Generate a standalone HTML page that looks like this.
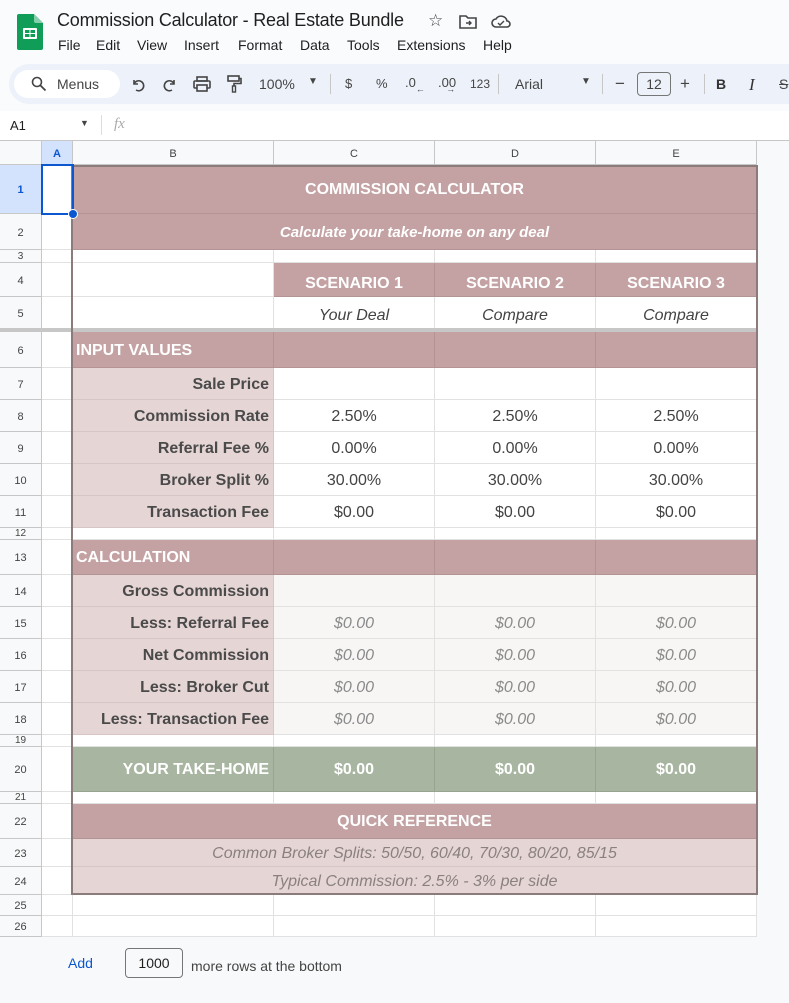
<!DOCTYPE html>
<html><head><meta charset="utf-8"><style>
*{margin:0;padding:0;box-sizing:border-box}
body{width:789px;height:1003px;background:#f8f9fa;font-family:"Liberation Sans",Arial,sans-serif;position:relative;overflow:hidden}
.r{position:absolute;left:0;width:757px}
.c{position:absolute;top:0;bottom:0;border-right:1px solid #e1e1e1;border-bottom:1px solid #e1e1e1;display:flex;align-items:center;justify-content:center;font-size:16px;color:#434343;white-space:nowrap;overflow:hidden;background:#fff;padding-top:2px}
.h{left:0;width:42px;font-size:11px;color:#444;background:#f8f9fa;border-right:1px solid #c7c7c7;border-bottom:1px solid #c7c7c7}
.a{left:42px;width:31px}
.b{left:73px;width:201px}
.cc{left:274px;width:161px}
.d{left:435px;width:161px}
.e{left:596px;width:161px}
.be{left:73px;width:684px}
.m{background:#c4a2a3;color:#fff;font-weight:bold;border-color:#b39394}
.p{background:#e6d5d5;justify-content:flex-end;padding-right:4px;font-weight:bold;color:#4a4a4a;border-color:#d8c6c6}
.g{background:#f7f6f5;color:#8a8a8a;font-style:italic}
.gr{background:#a8b5a0;color:#fff;font-weight:bold;border-color:#97a58f}
.l{justify-content:flex-start;padding-left:3px}
.rt{justify-content:flex-end;padding-right:4px}
.bot{align-items:flex-end;padding-bottom:3px}
.t{position:absolute;font-size:14px;color:#444;white-space:nowrap}
.mn{position:absolute;top:37px;font-size:14px;color:#1f1f1f}
</style></head><body>
<div style="position:absolute;left:0;top:0;width:789px;height:141px;background:#f9fbfd"></div>
<svg style="position:absolute;left:17px;top:14px" width="26" height="36" viewBox="0 0 26 36"><path d="M2 0h15l9 9v25a2 2 0 0 1-2 2H2a2 2 0 0 1-2-2V2a2 2 0 0 1 2-2z" fill="#0f9d58"/><path d="M17 0l9 9h-7a2 2 0 0 1-2-2z" fill="#87ceac"/><rect x="6" y="14" width="14" height="11" rx="1" fill="#fff"/><rect x="8" y="16" width="4.5" height="3" fill="#0f9d58"/><rect x="13.5" y="16" width="4.5" height="3" fill="#0f9d58"/><rect x="8" y="20" width="4.5" height="3" fill="#0f9d58"/><rect x="13.5" y="20" width="4.5" height="3" fill="#0f9d58"/></svg>
<div style="position:absolute;left:57px;top:10px;font-size:18px;color:#1f1f1f;letter-spacing:-0.2px">Commission Calculator - Real Estate Bundle</div>
<div style="position:absolute;left:428px;top:11px;font-size:17px;color:#444">☆</div>
<svg style="position:absolute;left:459px;top:14px" width="18" height="15" viewBox="0 0 18 15"><path d="M1 2h6l2 2h8v10H1z" fill="none" stroke="#444" stroke-width="1.6"/><path d="M7 9h5M10 7l2 2-2 2" fill="none" stroke="#444" stroke-width="1.4"/></svg>
<svg style="position:absolute;left:491px;top:14px" width="20" height="15" viewBox="0 0 20 15"><path d="M5 13a4 4 0 0 1 0-8 6 6 0 0 1 11 2 3 3 0 0 1 0 6z" fill="none" stroke="#444" stroke-width="1.6"/><path d="M7 9l2 2 4-4" fill="none" stroke="#444" stroke-width="1.4"/></svg>
<div class="mn" style="left:58px">File</div>
<div class="mn" style="left:96px">Edit</div>
<div class="mn" style="left:137px">View</div>
<div class="mn" style="left:184px">Insert</div>
<div class="mn" style="left:238px">Format</div>
<div class="mn" style="left:300px">Data</div>
<div class="mn" style="left:347px">Tools</div>
<div class="mn" style="left:397px">Extensions</div>
<div class="mn" style="left:483px">Help</div>
<div style="position:absolute;left:9px;top:64px;width:800px;height:40px;border-radius:20px;background:#edf2fa"></div>
<div style="position:absolute;left:14px;top:70px;width:106px;height:28px;border-radius:14px;background:#fff"></div>
<svg style="position:absolute;left:31px;top:76px" width="16" height="16" viewBox="0 0 16 16"><circle cx="6" cy="6" r="4.5" fill="none" stroke="#444" stroke-width="1.6"/><path d="M9.5 9.5l5 5" stroke="#444" stroke-width="1.8"/></svg>
<div class="t" style="left:57px;top:76px">Menus</div>
<svg style="position:absolute;left:130px;top:77px" width="16" height="16" viewBox="0 0 16 16"><path d="M4 3v4h4" fill="none" stroke="#444" stroke-width="1.6"/><path d="M4 7a5 5 0 1 1 2 6" fill="none" stroke="#444" stroke-width="1.6"/></svg>
<svg style="position:absolute;left:162px;top:77px" width="16" height="16" viewBox="0 0 16 16"><path d="M12 3v4H8" fill="none" stroke="#444" stroke-width="1.6"/><path d="M12 7a5 5 0 1 0-2 6" fill="none" stroke="#444" stroke-width="1.6"/></svg>
<svg style="position:absolute;left:193px;top:76px" width="18" height="16" viewBox="0 0 18 16"><rect x="4" y="1" width="10" height="4" fill="none" stroke="#444" stroke-width="1.6"/><rect x="1" y="5" width="16" height="7" rx="1" fill="none" stroke="#444" stroke-width="1.6"/><rect x="4" y="9" width="10" height="6" fill="#edf2fa" stroke="#444" stroke-width="1.6"/></svg>
<svg style="position:absolute;left:226px;top:75px" width="16" height="18" viewBox="0 0 16 18"><rect x="2" y="1" width="11" height="5" fill="none" stroke="#444" stroke-width="1.6"/><path d="M13 3.5h2v5H8v3" fill="none" stroke="#444" stroke-width="1.6"/><rect x="6.5" y="11" width="3" height="6" fill="none" stroke="#444" stroke-width="1.4"/></svg>
<div class="t" style="left:259px;top:76px">100%</div>
<div class="t" style="left:308px;top:76px;font-size:10px">▼</div>
<div class="t" style="left:345px;top:76px;font-size:13px">$</div>
<div class="t" style="left:376px;top:76px;font-size:13px">%</div>
<div class="t" style="left:405px;top:75px;font-size:13px">.0<span style="font-size:9px;position:relative;top:5px">←</span></div>
<div class="t" style="left:438px;top:75px;font-size:13px">.00<span style="font-size:9px;position:relative;top:5px;margin-left:-10px">→</span></div>
<div class="t" style="left:470px;top:77px;font-size:12px">123</div>
<div class="t" style="left:515px;top:76px">Arial</div>
<div class="t" style="left:581px;top:76px;font-size:10px">▼</div>
<div class="t" style="left:615px;top:74px;font-size:17px">−</div>
<div class="t" style="left:680px;top:74px;font-size:17px">+</div>
<div class="t" style="left:716px;top:76px;font-weight:bold;color:#333">B</div>
<div class="t" style="left:749px;top:75px;font-style:italic;font-family:'Liberation Serif',serif;font-size:17px;color:#333">I</div>
<div class="t" style="left:779px;top:76px;text-decoration:line-through">S</div>
<div style="position:absolute;left:637px;top:72px;width:34px;height:24px;border:1px solid #747775;border-radius:4px;font-size:14px;color:#444;text-align:center;line-height:22px;background:#edf2fa">12</div>
<div style="position:absolute;left:330px;top:74px;width:1px;height:20px;background:#c7c7c7"></div>
<div style="position:absolute;left:498px;top:74px;width:1px;height:20px;background:#c7c7c7"></div>
<div style="position:absolute;left:602px;top:74px;width:1px;height:20px;background:#c7c7c7"></div>
<div style="position:absolute;left:704px;top:74px;width:1px;height:20px;background:#c7c7c7"></div>
<div style="position:absolute;left:0;top:111px;width:789px;height:30px;background:#fff;border-bottom:1px solid #c7c7c7"></div>
<div style="position:absolute;left:10px;top:118px;font-size:13px;color:#1f1f1f">A1</div>
<div style="position:absolute;left:80px;top:118px;font-size:9px;color:#444">▼</div>
<div style="position:absolute;left:101px;top:115px;width:1px;height:20px;background:#ddd"></div>
<div style="position:absolute;left:114px;top:116px;font-size:15px;color:#aaa;font-style:italic;font-family:'Liberation Serif',serif">fx</div>

<div class="r" style="top:141px;height:24px">
<div class="c h"></div>
<div class="c a" style="background:#d3e3fd;color:#0b57d0;font-size:11px;font-weight:bold;border-color:#c7c7c7">A</div>
<div class="c b" style="background:#f8f9fa;font-size:11px;border-color:#c7c7c7">B</div>
<div class="c cc" style="background:#f8f9fa;font-size:11px;border-color:#c7c7c7">C</div>
<div class="c d" style="background:#f8f9fa;font-size:11px;border-color:#c7c7c7">D</div>
<div class="c e" style="background:#f8f9fa;font-size:11px;border-color:#c7c7c7">E</div>
</div>

<div class="r" style="top:165px;height:49px"><div class="c h" style="background:#d3e3fd;color:#0b57d0;font-weight:bold">1</div><div class="c a"></div><div class="c be m">COMMISSION CALCULATOR</div></div>
<div class="r" style="top:214px;height:36px"><div class="c h">2</div><div class="c a"></div><div class="c be m" style="font-style:italic;font-size:15px">Calculate your take-home on any deal</div></div>
<div class="r" style="top:250px;height:13px"><div class="c h" style="font-size:10px;padding-top:0">3</div><div class="c a"></div><div class="c b"></div><div class="c cc"></div><div class="c d"></div><div class="c e"></div></div>
<div class="r" style="top:263px;height:34px"><div class="c h">4</div><div class="c a"></div><div class="c b"></div><div class="c cc m bot">SCENARIO 1</div><div class="c d m bot">SCENARIO 2</div><div class="c e m bot">SCENARIO 3</div></div>
<div class="r" style="top:297px;height:32px"><div class="c h">5</div><div class="c a"></div><div class="c b"></div><div class="c cc bot" style="font-style:italic">Your Deal</div><div class="c d bot" style="font-style:italic">Compare</div><div class="c e bot" style="font-style:italic">Compare</div></div>
<div style="position:absolute;left:0;top:328px;width:757px;height:4px;background:#c7c7c7"></div>
<div class="r" style="top:332px;height:36px"><div class="c h">6</div><div class="c a"></div><div class="c b m l">INPUT VALUES</div><div class="c cc m"></div><div class="c d m"></div><div class="c e m"></div></div>
<div class="r" style="top:368px;height:32px"><div class="c h">7</div><div class="c a"></div><div class="c b p">Sale Price</div><div class="c cc"></div><div class="c d"></div><div class="c e"></div></div>
<div class="r" style="top:400px;height:32px"><div class="c h">8</div><div class="c a"></div><div class="c b p">Commission Rate</div><div class="c cc">2.50%</div><div class="c d">2.50%</div><div class="c e">2.50%</div></div>
<div class="r" style="top:432px;height:32px"><div class="c h">9</div><div class="c a"></div><div class="c b p">Referral Fee %</div><div class="c cc">0.00%</div><div class="c d">0.00%</div><div class="c e">0.00%</div></div>
<div class="r" style="top:464px;height:32px"><div class="c h">10</div><div class="c a"></div><div class="c b p">Broker Split %</div><div class="c cc">30.00%</div><div class="c d">30.00%</div><div class="c e">30.00%</div></div>
<div class="r" style="top:496px;height:32px"><div class="c h">11</div><div class="c a"></div><div class="c b p">Transaction Fee</div><div class="c cc">$0.00</div><div class="c d">$0.00</div><div class="c e">$0.00</div></div>
<div class="r" style="top:528px;height:12px"><div class="c h" style="font-size:10px;padding-top:0">12</div><div class="c a"></div><div class="c b"></div><div class="c cc"></div><div class="c d"></div><div class="c e"></div></div>
<div class="r" style="top:540px;height:35px"><div class="c h">13</div><div class="c a"></div><div class="c b m l">CALCULATION</div><div class="c cc m"></div><div class="c d m"></div><div class="c e m"></div></div>
<div class="r" style="top:575px;height:32px"><div class="c h">14</div><div class="c a"></div><div class="c b p">Gross Commission</div><div class="c cc g"></div><div class="c d g"></div><div class="c e g"></div></div>
<div class="r" style="top:607px;height:32px"><div class="c h">15</div><div class="c a"></div><div class="c b p">Less: Referral Fee</div><div class="c cc g">$0.00</div><div class="c d g">$0.00</div><div class="c e g">$0.00</div></div>
<div class="r" style="top:639px;height:32px"><div class="c h">16</div><div class="c a"></div><div class="c b p">Net Commission</div><div class="c cc g">$0.00</div><div class="c d g">$0.00</div><div class="c e g">$0.00</div></div>
<div class="r" style="top:671px;height:32px"><div class="c h">17</div><div class="c a"></div><div class="c b p">Less: Broker Cut</div><div class="c cc g">$0.00</div><div class="c d g">$0.00</div><div class="c e g">$0.00</div></div>
<div class="r" style="top:703px;height:32px"><div class="c h">18</div><div class="c a"></div><div class="c b p">Less: Transaction Fee</div><div class="c cc g">$0.00</div><div class="c d g">$0.00</div><div class="c e g">$0.00</div></div>
<div class="r" style="top:735px;height:12px"><div class="c h" style="font-size:10px;padding-top:0">19</div><div class="c a"></div><div class="c b"></div><div class="c cc"></div><div class="c d"></div><div class="c e"></div></div>
<div class="r" style="top:747px;height:45px"><div class="c h">20</div><div class="c a"></div><div class="c b gr rt">YOUR TAKE-HOME</div><div class="c cc gr">$0.00</div><div class="c d gr">$0.00</div><div class="c e gr">$0.00</div></div>
<div class="r" style="top:792px;height:12px"><div class="c h" style="font-size:10px;padding-top:0">21</div><div class="c a"></div><div class="c b"></div><div class="c cc"></div><div class="c d"></div><div class="c e"></div></div>
<div class="r" style="top:804px;height:35px"><div class="c h">22</div><div class="c a"></div><div class="c be m">QUICK REFERENCE</div></div>
<div class="r" style="top:839px;height:28px"><div class="c h">23</div><div class="c a"></div><div class="c be" style="background:#e6d5d5;color:#8a8080;font-style:italic;border-color:#d8c6c6">Common Broker Splits: 50/50, 60/40, 70/30, 80/20, 85/15</div></div>
<div class="r" style="top:867px;height:28px"><div class="c h">24</div><div class="c a"></div><div class="c be" style="background:#e6d5d5;color:#8a8080;font-style:italic;border-color:#d8c6c6">Typical Commission: 2.5% - 3% per side</div></div>
<div class="r" style="top:895px;height:21px"><div class="c h">25</div><div class="c a"></div><div class="c b"></div><div class="c cc"></div><div class="c d"></div><div class="c e"></div></div>
<div class="r" style="top:916px;height:21px"><div class="c h">26</div><div class="c a"></div><div class="c b"></div><div class="c cc"></div><div class="c d"></div><div class="c e"></div></div>

<div style="position:absolute;left:71px;top:165px;width:687px;height:730px;border:2px solid #8c7b7b;pointer-events:none"></div>
<div style="position:absolute;left:41px;top:164px;width:33px;height:51px;border:2px solid #0b57d0"></div>
<div style="position:absolute;left:68px;top:209px;width:10px;height:10px;border-radius:50%;background:#0b57d0;border:1px solid #fff"></div>

<div style="position:absolute;left:68px;top:955px;font-size:14px;color:#0b57d0">Add</div>
<div style="position:absolute;left:125px;top:948px;width:58px;height:30px;border:1px solid #747775;border-radius:4px;font-size:14px;color:#1f1f1f;text-align:center;line-height:28px">1000</div>
<div style="position:absolute;left:191px;top:958px;font-size:14px;color:#444">more rows at the bottom</div>
</body></html>
